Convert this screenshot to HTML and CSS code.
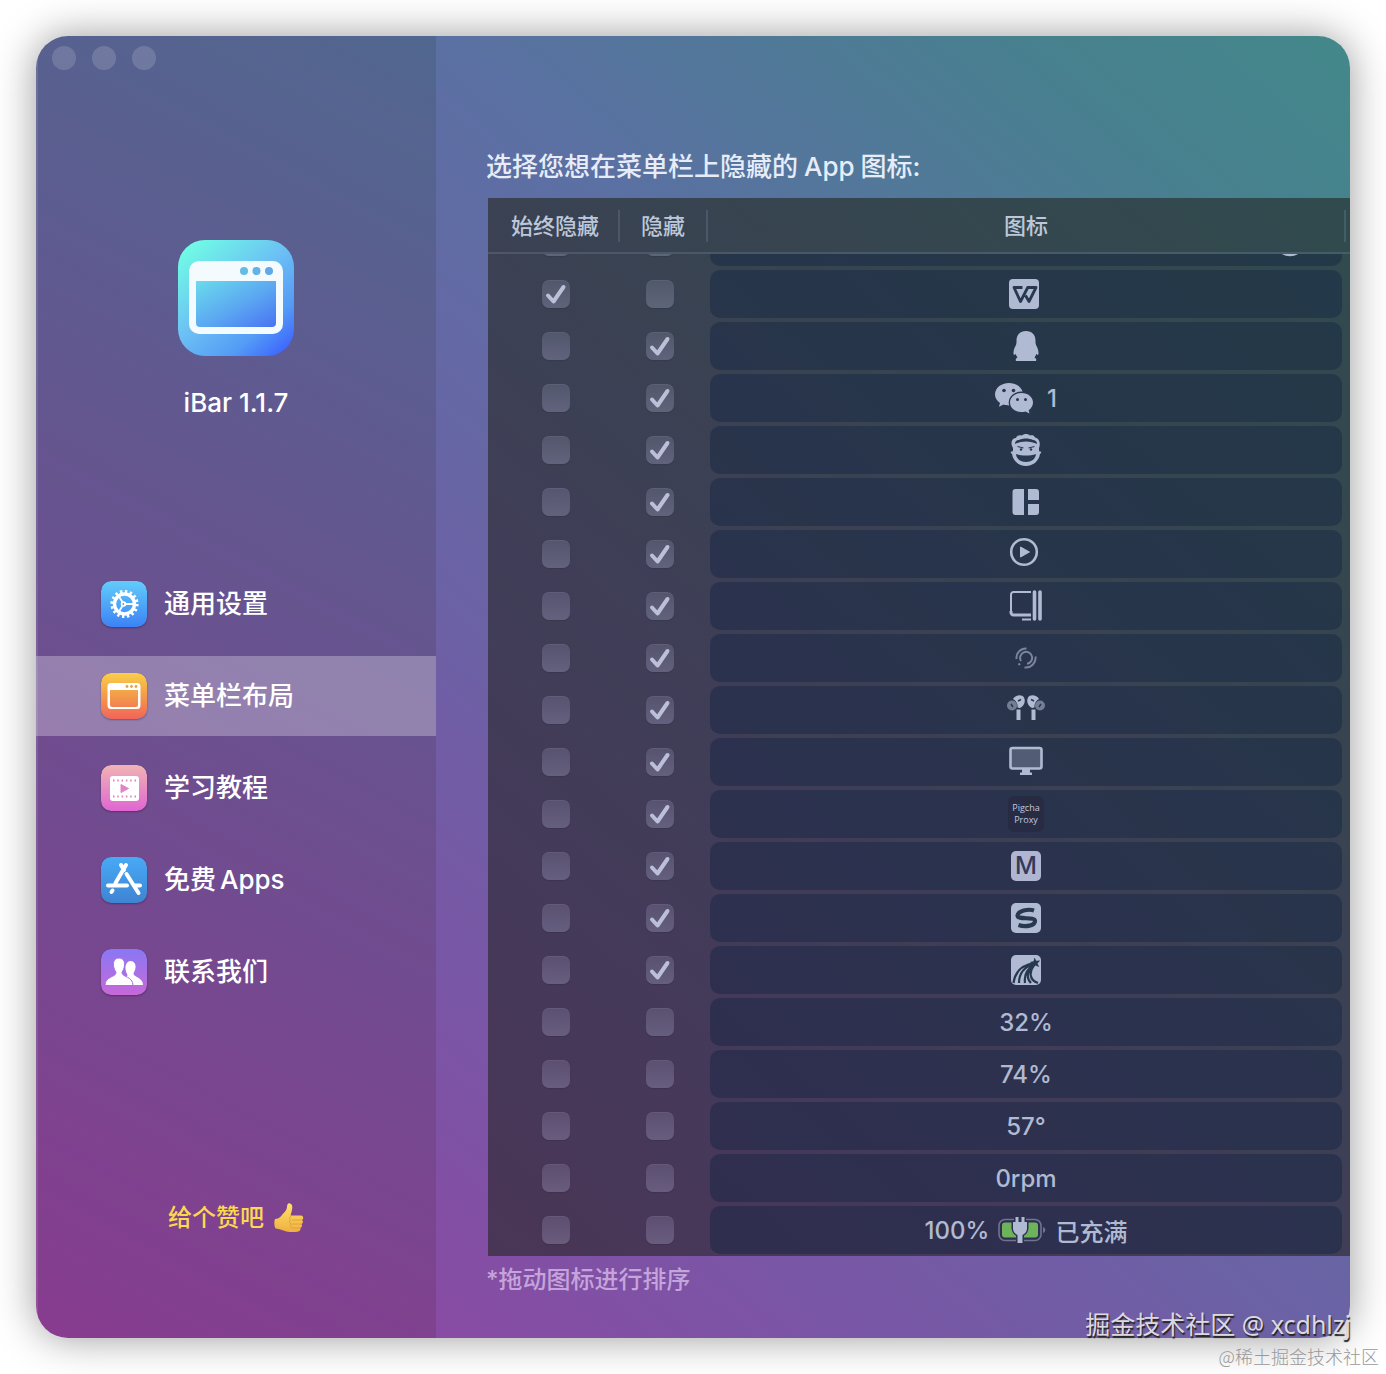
FILE: index.html
```html
<!DOCTYPE html>
<html lang="zh-CN">
<head>
  <meta charset="UTF-8" />
  <meta name="viewport" content="width=device-width, initial-scale=1.0" />
  <title>iBar - 菜单栏布局</title>
  <link rel="stylesheet" href="styles.css">
</head>
<body>
  <div class="window">
    <aside class="sidebar">
      <div class="lights"><span></span><span></span><span></span></div>

      <div class="app">
        <svg class="app-icon" viewBox="0 0 118 118">
          <defs>
            <linearGradient id="gApp" x1="0.1" y1="0" x2="0.95" y2="1">
              <stop offset="0" stop-color="#70ffe4" />
              <stop offset="0.45" stop-color="#6cc0f4" />
              <stop offset="0.75" stop-color="#549cf6" />
              <stop offset="1" stop-color="#3a5cff" />
            </linearGradient>
            <linearGradient id="gScreen" x1="0" y1="0" x2="1" y2="1">
              <stop offset="0" stop-color="#6adcec" />
              <stop offset="0.55" stop-color="#5ba6f2" />
              <stop offset="1" stop-color="#4872f4" />
            </linearGradient>
          </defs>
          <rect x="1" y="1" width="116" height="116" rx="27" fill="url(#gApp)" />
          <rect x="12" y="22" width="94" height="73" rx="10" fill="#f4fbff" />
          <path d="M19 42h80v42a4 4 0 0 1-4 4H23a4 4 0 0 1-4-4z" fill="url(#gScreen)" />
          <circle cx="67" cy="32" r="4" fill="#62bce4" />
          <circle cx="79.500" cy="32" r="4" fill="#62b2e4" />
          <circle cx="92" cy="32" r="4" fill="#62a8e8" />
        </svg>
        <h1>iBar 1.1.7</h1>
      </div>

      <nav class="menu">
        <button type="button" class="menu-item">
          <svg class="menu-icon" viewBox="0 0 46 46">
            <defs><linearGradient id="g1" x1="0" y1="0" x2="0" y2="1"><stop offset="0" stop-color="#62ccfa" /><stop offset="1" stop-color="#3c82f6" /></linearGradient></defs>
            <rect width="46" height="46" rx="10" fill="url(#g1)" />
            <g fill="none" stroke="#fff">
              <circle cx="23.500" cy="23" r="12.600" stroke-width="3" stroke-dasharray="2.400 2.548" />
              <circle cx="23.500" cy="23" r="10" stroke-width="3.400" />
              <path d="M23 23h10M22 22l-5-8M22 24l-5 8" stroke-width="1.800" />
              <circle cx="22.500" cy="23" r="2" stroke-width="1.500" />
            </g>
          </svg>
          <span>通用设置</span>
        </button>
        <button type="button" class="menu-item active">
          <svg class="menu-icon" viewBox="0 0 46 46">
            <defs><linearGradient id="g2" x1="0" y1="0" x2="0" y2="1"><stop offset="0" stop-color="#f9cf48" /><stop offset="0.6" stop-color="#f2904c" /><stop offset="1" stop-color="#f2645a" /></linearGradient></defs>
            <rect width="46" height="46" rx="10" fill="url(#g2)" />
            <path d="M10 10h26a3.500 3.500 0 0 1 3.500 3.500v19A3.500 3.500 0 0 1 36 36H10a3.500 3.500 0 0 1-3.500-3.500v-19A3.500 3.500 0 0 1 10 10zM9 17v15a2 2 0 0 0 2 2h24a2 2 0 0 0 2-2V17z" fill="#fff" fill-rule="evenodd" />
            <circle cx="26" cy="13.500" r="1.400" fill="#e9a04c" /><circle cx="30.500" cy="13.500" r="1.400" fill="#e9a04c" /><circle cx="35" cy="13.500" r="1.400" fill="#e9a04c" />
          </svg>
          <span>菜单栏布局</span>
        </button>
        <button type="button" class="menu-item">
          <svg class="menu-icon" viewBox="0 0 46 46">
            <defs><linearGradient id="g3" x1="0" y1="0" x2="0" y2="1"><stop offset="0" stop-color="#f0b4b4" /><stop offset="1" stop-color="#e066d2" /></linearGradient></defs>
            <rect width="46" height="46" rx="10" fill="url(#g3)" />
            <rect x="9" y="11" width="29" height="25" rx="3" fill="#fff" />
            <path d="M12 15.500h24M12 31.500h24" stroke="#dc84b8" stroke-width="2" stroke-dasharray="1.500 2.800" />
            <path d="M20 19.500l7.500 4-7.500 4z" fill="#e384c4" stroke="#e384c4" stroke-linejoin="round" />
          </svg>
          <span>学习教程</span>
        </button>
        <button type="button" class="menu-item">
          <svg class="menu-icon" viewBox="0 0 46 46">
            <defs><linearGradient id="g4" x1="0" y1="0" x2="0" y2="1"><stop offset="0" stop-color="#48aaf6" /><stop offset="1" stop-color="#3e84d2" /></linearGradient></defs>
            <rect width="46" height="46" rx="10" fill="url(#g4)" />
            <g stroke="#fff" stroke-width="4" stroke-linecap="round">
              <path d="M25 8L14.500 26M20 8l3 5M25.500 17l12 19M7 28.500h19M34 28.500h5M10.500 35l1-1.500" />
            </g>
          </svg>
          <span>免费<span class="latin">Apps</span></span>
        </button>
        <button type="button" class="menu-item">
          <svg class="menu-icon" viewBox="0 0 46 46">
            <defs><linearGradient id="g5" x1="0" y1="0" x2="0" y2="1"><stop offset="0" stop-color="#8878f4" /><stop offset="1" stop-color="#c868d8" /></linearGradient></defs>
            <rect width="46" height="46" rx="10" fill="url(#g5)" />
            <path d="M29.500 12c3.500 0 5.500 3 5 6.500-.3 3-1.500 4.500-2 6 0 4 9.500 3.500 9.500 11.500H20c0-5 6-7 6.500-10-1-2-2-4-2-7 0-4 2-7 5-7z" fill="#fff" />
            <path d="M18 9c4 0 6 3 5.500 7.500-.3 3-1.500 5-2.500 7 0 5 11 3.500 11 13H4c0-9.500 11-8 11-13-1-2-2.200-4-2.500-7C12 12 14 9 18 9z" fill="#fff" stroke="#a670e6" />
          </svg>
          <span>联系我们</span>
        </button>
      </nav>

      <a class="rate" href="#">
        <span>给个赞吧</span>
        <svg class="thumb" viewBox="0 0 30 30">
          <defs><linearGradient id="g6" x1="0" y1="0" x2="0" y2="1"><stop offset="0" stop-color="#ffe26a" /><stop offset="1" stop-color="#eeb040" /></linearGradient></defs>
          <path d="M1 16c3 0 5-1.500 7-4 2-2.500 4.500-4 5-8 .2-3 1-4 2.500-3.700 3 .7 3.500 4 2 8.700l-1 3.500H27c2.500 0 3 3.500 1 4.500 1.500 1 1 3.500-.5 4 1 1.500.5 3.300-1 3.700.5 2.300-1 3.800-3 4-5 .6-10 .4-14-1.200C6.500 26 4 26 1.500 25.500 0 23 0 18.500 1 16z" fill="url(#g6)" />
          <path d="M18 17h9.500M18 21h9M18.500 25h7.500M17 13c-1.500 1-2 3-.5 4-1.500 1-1.200 3 .5 4-1 1.500-.5 3 1 4" fill="none" stroke="#dc9c36" stroke-width="0.800" stroke-linecap="round" />
        </svg>
      </a>
    </aside>

    <main class="main">
      <h2>选择您想在菜单栏上隐藏的<span class="latin">App</span>图标:</h2>

      <table class="icons">
        <thead>
          <tr><th>始终隐藏</th><th>隐藏</th><th>图标</th></tr>
        </thead>
        <tbody>
          <tr>
            <td><input type="checkbox" aria-label="始终隐藏" /></td>
            <td><input type="checkbox" aria-label="隐藏" /></td>
            <td><div class="pill pill-end"><svg viewBox="0 0 32 32"><circle cx="16" cy="15" r="14" fill="none" stroke="currentColor" stroke-width="2.500" /></svg></div></td>
          </tr>
          <tr>
            <td><input type="checkbox" aria-label="始终隐藏 WPS" checked /></td>
            <td><input type="checkbox" aria-label="隐藏 WPS" /></td>
            <td><div class="pill"><svg viewBox="0 0 32 32"><rect x="-1" y="1" width="30" height="30" rx="4" fill="currentColor" /><path d="M12.500 9.500H4l6.500 14 7.500-14.500M17 9.500h9L19 23.500l-3.500-6" class="cut" stroke-width="2.800" stroke-linejoin="round" /></svg></div></td>
          </tr>
          <tr>
            <td><input type="checkbox" aria-label="始终隐藏 QQ" /></td>
            <td><input type="checkbox" aria-label="隐藏 QQ" checked /></td>
            <td><div class="pill"><svg viewBox="0 0 32 32"><path d="M16 1c6 0 9.500 4 9.500 9.500 0 2-.1 3 .5 4.500 2 3.500 3 7 2.300 9.500-.4.800-1.300.2-2-.5-.3 1.300-.9 2.500-1.800 3.500 1.500.9 2.300 1.900 1.500 3.500H6c-.8-1.600 0-2.600 1.500-3.500-.9-1-1.500-2.200-1.800-3.500-.7.700-1.600 1.300-2 .5C3 22 4 18.500 6 15c.6-1.500.5-2.500.5-4.500C6.500 5 10 1 16 1z" fill="currentColor" /></svg></div></td>
          </tr>
          <tr>
            <td><input type="checkbox" aria-label="始终隐藏微信" /></td>
            <td><input type="checkbox" aria-label="隐藏微信" checked /></td>
            <td><div class="pill"><svg class="wide" viewBox="0 0 40 32"><path d="M14 1C6 1 0 6 0 12.500 0 16 2 19 5 21l-1 3.800 4.500-2.300c2 .6 4 .9 5.500.9 8 0 14-5 14-11S22 1 14 1z" fill="currentColor" /><ellipse cx="26.500" cy="20.500" rx="12.800" ry="11" class="hole" /><path d="M26.500 11C20 11 15 15.200 15 20.500S20 30 26.500 30c1.500 0 2.800-.2 4-.6l4 2-.8-3.200c2.600-1.800 4.300-4.500 4.300-7.700C38 15.200 33 11 26.500 11z" fill="currentColor" /><g class="hole"><circle cx="9" cy="8.500" r="1.800" /><circle cx="18.500" cy="8.500" r="1.800" /><circle cx="22.500" cy="17.500" r="1.500" /><circle cx="30.500" cy="17.500" r="1.500" /></g></svg><span>1</span></div></td>
          </tr>
          <tr>
            <td><input type="checkbox" aria-label="始终隐藏面孔" /></td>
            <td><input type="checkbox" aria-label="隐藏面孔" checked /></td>
            <td><div class="pill"><svg viewBox="0 0 32 32"><path d="M3 14C0 9 2 4 6 4c1-3 4-3 6-2.500C14-.5 18-.5 20 1.500c2-.5 4-.5 5 2C29 4 31 9 29 14c0 2 0 3 .5 3.500 2 0 2.500.5.500 2.500-1 7-7 12-14 12S3 27 2 20c-2-2-1.500-2.500.5-2.500C3 17 3 16 3 14z" fill="currentColor" /><path d="M5 10c0-3 2-4 4-4 4-2 10-2 14 0 2 0 4 1 4 4-6-3.500-16-3.500-22 0zM6 20c6 2 14 2 20 0-.5 5-4.500 8-10 8S6.500 25 6 20z" class="hole" /><path d="M7.500 12.500l6 1.500M24.500 12.500l-6 1.500" class="cut" stroke-width="1.200" /><circle cx="11" cy="15.500" r="1.200" class="hole" /><circle cx="21" cy="15.500" r="1.200" class="hole" /></svg></div></td>
          </tr>
          <tr>
            <td><input type="checkbox" aria-label="始终隐藏窗口布局" /></td>
            <td><input type="checkbox" aria-label="隐藏窗口布局" checked /></td>
            <td><div class="pill"><svg viewBox="0 0 32 32" fill="currentColor"><path d="M5.500 3H14v26H5.500a3 3 0 0 1-3-3V6a3 3 0 0 1 3-3zM18 3h8a3 3 0 0 1 3 3v8H18zM18 18h11v8a3 3 0 0 1-3 3h-8z" /></svg></div></td>
          </tr>
          <tr>
            <td><input type="checkbox" aria-label="始终隐藏播放器" /></td>
            <td><input type="checkbox" aria-label="隐藏播放器" checked /></td>
            <td><div class="pill"><svg viewBox="0 0 32 32"><circle cx="14" cy="14" r="12.800" fill="none" stroke="currentColor" stroke-width="2.600" /><path d="M10.500 9l9 5-9 5z" fill="currentColor" stroke="currentColor" stroke-linejoin="round" /></svg></div></td>
          </tr>
          <tr>
            <td><input type="checkbox" aria-label="始终隐藏侧边屏幕" /></td>
            <td><input type="checkbox" aria-label="隐藏侧边屏幕" checked /></td>
            <td><div class="pill"><svg viewBox="0 0 32 32" fill="none" stroke="currentColor"><path d="M21 2H3.500A2.500 2.500 0 0 0 1 4.500V23" stroke-width="2" /><path d="M1 21v1.500A2.500 2.500 0 0 0 3.500 25H21" stroke-width="3" /><path d="M12 29.500h9" stroke-width="2" /><path d="M24.500 2v27M30 2v27" stroke-width="3.600" stroke-linecap="round" /></svg></div></td>
          </tr>
          <tr>
            <td><input type="checkbox" aria-label="始终隐藏同步" /></td>
            <td><input type="checkbox" aria-label="隐藏同步" checked /></td>
            <td><div class="pill"><svg class="dim" viewBox="0 0 32 32" fill="none" stroke="currentColor" stroke-width="2"><path d="M16.500 6.500A9.500 9.500 0 0 0 6.500 17M25.500 14.500A9.800 9.800 0 0 1 14.500 25.500M11 19a6 6 0 1 1 6 2.800M8.500 21.500l1.500 1.500" /></svg></div></td>
          </tr>
          <tr>
            <td><input type="checkbox" aria-label="始终隐藏 AirPods" /></td>
            <td><input type="checkbox" aria-label="隐藏 AirPods" checked /></td>
            <td><div class="pill"><svg class="wide" viewBox="0 0 40 32"><g fill="currentColor"><circle cx="6" cy="11.500" r="5" opacity="0.550" /><circle cx="34" cy="11.500" r="5" opacity="0.550" /><path d="M7 5c2-4 9-5 11-1.500 2 4 0 9-4 10.500l-2.500-.5C12 10 10 6.500 7 5zM33 5c-2-4-9-5-11-1.500-2 4 0 9 4 10.500l2.500-.5C28 10 30 6.500 33 5zM10.500 15.500h4v10.500h-4zM25.500 15.500h4v10.500h-4z" /></g><path d="M12 7l3-1.500M28 7l-3-1.500M5 10l2 3M35 10l-2 3" class="cut" stroke-width="1.500" /></svg></div></td>
          </tr>
          <tr>
            <td><input type="checkbox" aria-label="始终隐藏显示器" /></td>
            <td><input type="checkbox" aria-label="隐藏显示器" checked /></td>
            <td><div class="pill"><svg viewBox="0 0 32 32"><rect x="0.500" y="2" width="31" height="20.500" rx="2" fill="currentColor" fill-opacity="0.300" stroke="currentColor" stroke-width="2.600" /><path d="M12 23h8v3.500h2V29H10v-2.500h2z" fill="currentColor" /></svg></div></td>
          </tr>
          <tr>
            <td><input type="checkbox" aria-label="始终隐藏 Pigcha" /></td>
            <td><input type="checkbox" aria-label="隐藏 Pigcha" checked /></td>
            <td><div class="pill"><div class="pigcha">Pigcha<br />Proxy</div></div></td>
          </tr>
          <tr>
            <td><input type="checkbox" aria-label="始终隐藏 M" /></td>
            <td><input type="checkbox" aria-label="隐藏 M" checked /></td>
            <td><div class="pill"><div class="letter">M</div></div></td>
          </tr>
          <tr>
            <td><input type="checkbox" aria-label="始终隐藏搜狗" /></td>
            <td><input type="checkbox" aria-label="隐藏搜狗" checked /></td>
            <td><div class="pill"><svg viewBox="0 0 32 32"><rect x="1" y="1" width="30" height="30" rx="5" fill="currentColor" /><path d="M24 8.500c-6-2-16 .5-16.500 5C7 18 25 14.500 25 19c0 4.500-9 6.500-16.500 4" class="cut" stroke-width="4.200" /></svg></div></td>
          </tr>
          <tr>
            <td><input type="checkbox" aria-label="始终隐藏流星" /></td>
            <td><input type="checkbox" aria-label="隐藏流星" checked /></td>
            <td><div class="pill"><svg viewBox="0 0 32 32"><rect x="1" y="1" width="30" height="30" rx="5" fill="currentColor" /><path d="M3.500 29C5 18 12 11 24 9M9 29c0-9 5-16 15-19M15 29c-1-8 2-14 9-18M28 29c-9-3-9-11-4-18M21 29c-5-5-4-11 2-17" class="cut" stroke-width="2.200" /><path d="M24.500 3.500l1.700 3.300 4-.3-2.700 2.900 1.700 3.600-3.700-1.500-3 2.300.5-3.800-3.200-2 3.800-.8z" class="hole" /></svg></div></td>
          </tr>
          <tr>
            <td><input type="checkbox" aria-label="始终隐藏 CPU" /></td>
            <td><input type="checkbox" aria-label="隐藏 CPU" /></td>
            <td><div class="pill"><span>32%</span></div></td>
          </tr>
          <tr>
            <td><input type="checkbox" aria-label="始终隐藏内存" /></td>
            <td><input type="checkbox" aria-label="隐藏内存" /></td>
            <td><div class="pill"><span>74%</span></div></td>
          </tr>
          <tr>
            <td><input type="checkbox" aria-label="始终隐藏温度" /></td>
            <td><input type="checkbox" aria-label="隐藏温度" /></td>
            <td><div class="pill"><span>57°</span></div></td>
          </tr>
          <tr>
            <td><input type="checkbox" aria-label="始终隐藏风扇" /></td>
            <td><input type="checkbox" aria-label="隐藏风扇" /></td>
            <td><div class="pill"><span>0rpm</span></div></td>
          </tr>
          <tr>
            <td><input type="checkbox" aria-label="始终隐藏电池" /></td>
            <td><input type="checkbox" aria-label="隐藏电池" /></td>
            <td><div class="pill battery"><span>100%</span><svg viewBox="0 0 48 26"><rect x="1" y="2.500" width="42" height="21" rx="6" fill="none" stroke="currentColor" stroke-width="1.600" opacity="0.500" /><rect x="4" y="5.500" width="36" height="15" rx="3" fill="#6cb35c" /><path d="M45 10c3 1 3 5 0 6z" fill="currentColor" opacity="0.500" /><path d="M17.500 0v5H15v6c0 4 2 5.500 4.500 7v8h5v-8c2.500-1.500 4.500-3 4.500-7V5h-2.500V0h-3v5h-3V0z" fill="currentColor" class="plug" stroke-width="3" paint-order="stroke" /></svg><span>已充满</span></div></td>
          </tr>
        </tbody>
      </table>

      <p class="note">*拖动图标进行排序</p>
    </main>
  </div>

  <div class="mark mark-user">掘金技术社区 @ xcdhlzj</div>
  <div class="mark mark-site">@稀土掘金技术社区</div>
</body>
</html>
```
FILE: styles.css
```css
* {
  box-sizing: border-box;
}
body {
  margin: 0;
  padding: 36px;
  position: relative;
  background: #fff;
  font-family: Inter, "Noto Sans CJK SC", sans-serif;
  font-weight: 500;
  color: #fff;
}
.window {
  display: flex;
  height: calc(100vh - 72px);
  border-radius: 32px;
  overflow: hidden;
  box-shadow: 0 0 40px rgba(0, 0, 0, 0.4);
}

/* sidebar */
.sidebar {
  flex: 0 0 400px;
  display: flex;
  flex-direction: column;
  padding: 10px 0 104px;
  background: linear-gradient(208deg, #51678f 0%, #5d5c90 25%, #6b508f 52%, #79468f 76%, #883c8f 100%);
  box-shadow: inset 2px 0 rgba(255, 255, 255, 0.1);
}
.lights {
  display: flex;
  gap: 16px;
  padding-left: 16px;
}
.lights span {
  width: 24px;
  height: 24px;
  border-radius: 50%;
  background: rgba(255, 255, 255, 0.15);
}
.app {
  margin-top: 169px;
  text-align: center;
}
.app-icon {
  display: block;
  width: 118px;
  height: 118px;
  margin: 0 auto;
}
.app h1 {
  margin: 29px 0 0;
  font-size: 26px;
  line-height: 34px;
  font-weight: 500;
}
.menu {
  display: flex;
  flex-direction: column;
  gap: 12px;
  margin-top: 144px;
}
.menu-item {
  display: flex;
  align-items: center;
  gap: 17px;
  height: 80px;
  padding: 0 0 0 65px;
  border: none;
  background: none;
  color: #fff;
  font: inherit;
  font-size: 26px;
  line-height: 38px;
  cursor: pointer;
}
.menu-item.active {
  background: rgba(255, 255, 255, 0.28);
}
.menu-icon {
  width: 46px;
  height: 46px;
  border-radius: 10px;
  box-shadow: 0 1px 2px rgba(0, 0, 0, 0.3);
}
.latin {
  margin: 0 4px;
}
.rate {
  display: flex;
  align-items: center;
  justify-content: center;
  gap: 10px;
  margin-top: auto;
  color: #fbd850;
  font-size: 24px;
  line-height: 32px;
  text-decoration: none;
}
.thumb {
  width: 30px;
  height: 30px;
}

/* content */
.main {
  flex: 1;
  min-width: 0;
  display: flex;
  flex-direction: column;
  padding: 112px 0 42px 52px;
  background: linear-gradient(221deg, #43888a 0%, #48808f 14%, #5b70a3 38%, #6a63a5 62%, #7956a6 82%, #884ba4 100%);
}
.main h2 {
  margin: 0 0 12px -2px;
  font-size: 26px;
  line-height: 38px;
  font-weight: 500;
  color: #e6ecf8;
}
.main h2 .latin {
  margin: 0 6px;
}
.icons {
  flex: 1;
  min-height: 0;
  display: flex;
  flex-direction: column;
  background: linear-gradient(221deg, #304b4e 0%, #36454f 26%, #3e3f56 54%, #45395a 80%, #4a3556 100%);
}
.icons thead {
  display: block;
  height: 56px;
  border-bottom: 2px solid rgba(180, 210, 240, 0.15);
}
.icons tbody {
  flex: 1;
  min-height: 0;
  display: flex;
  flex-direction: column;
  justify-content: flex-end;
  overflow: hidden;
}
.icons tr {
  flex: none;
  display: grid;
  grid-template-columns: 128px 88px 1fr;
  padding: 0 4px;
}
.icons th {
  height: 32px;
  margin-top: 12px;
  padding: 0;
  border-right: 2px solid rgba(180, 210, 240, 0.15);
  font-size: 22px;
  line-height: 32px;
  font-weight: 500;
  color: #bcc8da;
}
.icons td {
  display: flex;
  align-items: center;
  justify-content: center;
  height: 52px;
  padding: 2px 8px 2px 0;
}
.icons td:first-child {
  padding-right: 0;
}
.icons td:last-child {
  padding: 2px 4px 2px 2px;
}
.icons input {
  appearance: none;
  width: 28px;
  height: 28px;
  margin: 0;
  border-radius: 7px;
  background: linear-gradient(rgba(200, 200, 235, 0.16), rgba(200, 200, 235, 0.26));
  box-shadow: inset 0 1px rgba(255, 255, 255, 0.06), 0 1px 1px rgba(0, 0, 0, 0.1);
}
.icons input:checked {
  background-image: url("data:image/svg+xml,%3Csvg xmlns='http://www.w3.org/2000/svg' viewBox='0 0 28 28'%3E%3Cpath d='M6 15.500l5.500 6L21.500 7' fill='none' stroke='%23bcbfd8' stroke-width='4' stroke-linecap='round' stroke-linejoin='round'/%3E%3C/svg%3E"), linear-gradient(rgba(200, 200, 235, 0.16), rgba(200, 200, 235, 0.26));
}
.pill {
  flex: 1;
  display: flex;
  align-items: center;
  justify-content: center;
  gap: 12px;
  height: 48px;
  border-radius: 10px;
  background: rgba(14, 32, 66, 0.4);
  color: #b0bad2;
  font-size: 24px;
}
.pill svg {
  width: 32px;
  height: 32px;
  overflow: visible;
}
.pill svg.wide {
  width: 40px;
}
.pill svg.dim {
  opacity: 0.6;
}
.pill-end {
  justify-content: flex-end;
  padding-right: 36px;
}
.pill .cut {
  fill: none;
  stroke: #28384e;
}
.pill .hole {
  fill: #28384e;
}
.pigcha {
  width: 36px;
  padding: 6px 0;
  border-radius: 6px;
  background: rgba(36, 36, 56, 0.4);
  color: #c4c8dc;
  font-family: "Open Sans", sans-serif;
  font-size: 9px;
  line-height: 12px;
  text-align: center;
}
.letter {
  width: 30px;
  height: 30px;
  border-radius: 5px;
  background: #b0b6d2;
  color: #343a5a;
  font-size: 24px;
  line-height: 30px;
  text-align: center;
}
.battery {
  gap: 9px;
}
.pill.battery svg {
  width: 48px;
  height: 26px;
}
.plug {
  stroke: #2e3050;
}
.note {
  margin: 8px 0 0 -2px;
  font-size: 24px;
  line-height: 32px;
  font-weight: 500;
  color: #c4a4da;
}

/* watermarks over the window edge */
.mark {
  position: absolute;
  font-family: "Noto Sans", "Noto Sans CJK SC", sans-serif;
  font-weight: 400;
  white-space: nowrap;
}
.mark-user {
  right: 35px;
  bottom: 33px;
  font-size: 25px;
  line-height: 34px;
  color: #ddd8e0;
  text-shadow: 1px 2px 1px #222;
}
.mark-site {
  right: 7px;
  bottom: 6px;
  font-family: "Noto Sans CJK SC", sans-serif;
  font-size: 18px;
  line-height: 24px;
  font-weight: 300;
  color: #999;
}
```
